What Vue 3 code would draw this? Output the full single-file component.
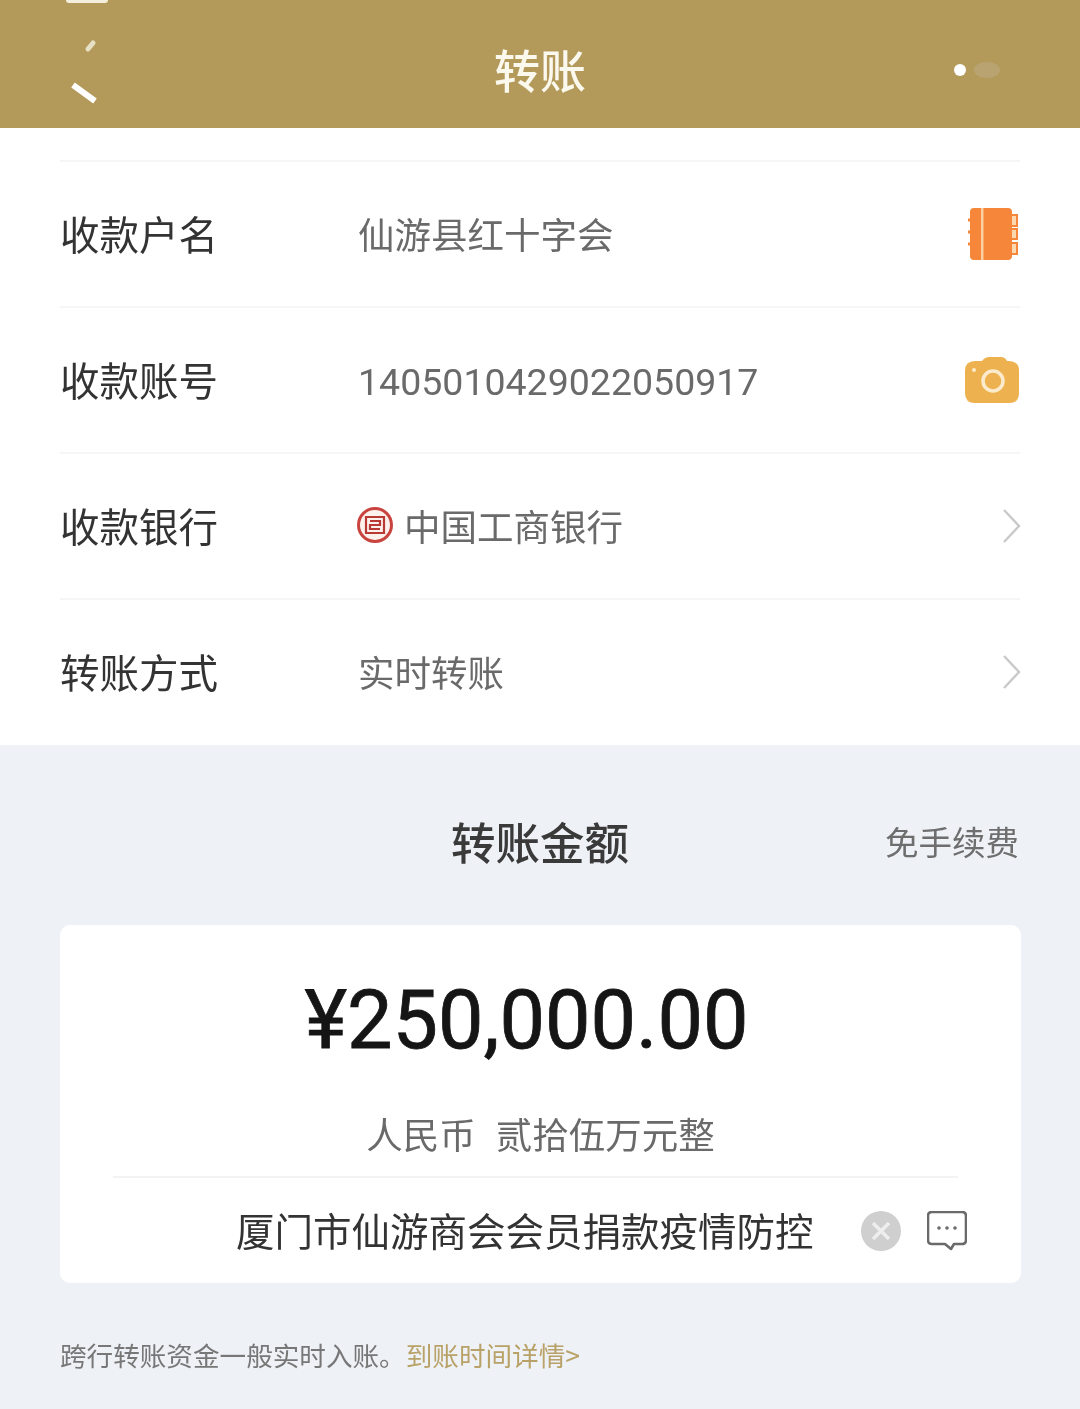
<script setup>
const rows = [
  { label: '收款户名', value: '仙游县红十字会', icon: 'book' },
  { label: '收款账号', value: '14050104290 22050917'.replace(' ', ''), icon: 'camera', num: true },
  { label: '收款银行', value: '中国工商银行', icon: 'chevron', bank: true },
  { label: '转账方式', value: '实时转账', icon: 'chevron' },
]
</script>

<template>
  <div class="page">
    <header class="topbar">
      <span class="status-scrap"></span>
      <svg class="back" width="60" height="80" viewBox="0 0 60 80">
        <path d="M33 4 L28 10" stroke="#e6e0c4" stroke-width="5" stroke-linecap="round" fill="none" />
        <path d="M13 46 L35 62" stroke="#fff" stroke-width="6" fill="none" />
      </svg>
      <h1 class="title">转账</h1>
      <div class="more">
        <i class="dot"></i>
        <i class="dot-faint"></i>
      </div>
    </header>

    <section class="form">
      <div v-for="row in rows" :key="row.label" class="row">
        <span class="label">{{ row.label }}</span>
        <span class="value" :class="{ num: row.num }">
          <svg v-if="row.bank" class="icbc" width="38" height="38" viewBox="0 0 38 38">
            <circle cx="19" cy="19" r="16.5" fill="#fdf1ee" stroke="#c9433f" stroke-width="3" />
            <path d="M10 11 H28 V27 H10 Z M14 15 H24 V19 H14 V23 H24" fill="none" stroke="#b93a35" stroke-width="2.2" />
          </svg>
          {{ row.value }}
        </span>
        <svg v-if="row.icon === 'book'" class="icon" width="52" height="56" viewBox="0 0 52 56">
          <rect x="3" y="2" width="42" height="52" rx="4" fill="#f5863a" />
          <rect x="14" y="2" width="2.5" height="52" fill="#fbcf9f" />
          <path d="M45 9 H50 V20 H45 M45 23 H50 V33 H45 M45 37 H50 V48 H45" fill="#fbd9b0" stroke="#f5863a" stroke-width="2" />
          <path d="M1 14 H5 M1 26 H5 M1 38 H5" stroke="#f5863a" stroke-width="3" />
        </svg>
        <svg v-else-if="row.icon === 'camera'" class="icon" width="54" height="48" viewBox="0 0 54 48">
          <path d="M10 5 H17 Q20 1 24 1 H36 Q40 1 42 5 H44 Q54 5 54 15 V37 Q54 47 44 47 H10 Q0 47 0 37 V15 Q0 5 10 5 Z" fill="#edb24f" />
          <circle cx="28" cy="25" r="10" fill="none" stroke="#fbeacb" stroke-width="3.5" />
          <circle cx="9" cy="14" r="2" fill="#fbeacb" />
        </svg>
        <svg v-else class="icon chevron" width="20" height="36" viewBox="0 0 20 36">
          <path d="M2 2 L17 18 L2 34" fill="none" stroke="#c9c9c9" stroke-width="2.4" />
        </svg>
      </div>
    </section>

    <section class="amount-area">
      <div class="amount-head">
        <h2 class="amount-title">转账金额</h2>
        <span class="fee">免手续费</span>
      </div>

      <div class="card">
        <div class="amount">¥250,000.00</div>
        <div class="cn-amount"><span>人民币</span><span>贰拾伍万元整</span></div>
        <div class="note-row">
          <span class="note">厦门市仙游商会会员捐款疫情防控</span>
          <svg class="clear" width="40" height="40" viewBox="0 0 40 40">
            <circle cx="20" cy="20" r="20" fill="#cfcfcf" />
            <path d="M12 12 L28 28 M28 12 L12 28" stroke="#eee" stroke-width="3.5" />
          </svg>
          <svg class="msg" width="40" height="40" viewBox="0 0 40 40">
            <path d="M5 1 H35 Q39 1 39 5 V29 Q39 33 35 33 H27 L24 38 L18 33 H5 Q1 33 1 29 V5 Q1 1 5 1 Z" fill="none" stroke="#6a6a6a" stroke-width="2.6" stroke-linejoin="round" />
            <circle cx="12" cy="17" r="1.8" fill="#6a6a6a" />
            <circle cx="20" cy="17" r="1.8" fill="#6a6a6a" />
            <circle cx="28" cy="17" r="1.8" fill="#6a6a6a" />
          </svg>
        </div>
      </div>

      <p class="tip">跨行转账资金一般实时入账。<a class="tip-link">到账时间详情&gt;</a></p>
    </section>
  </div>
</template>

<style>
html, body {
  margin: 0;
  background: #eef1f6;
}
</style>

<style scoped>
.page {
  width: 1080px;
  height: 1409px;
  overflow: hidden;
  font-family: "Noto Sans CJK SC", "Noto Sans", sans-serif;
  background: #eef1f6;
  filter: blur(0.6px);
}

.topbar {
  position: relative;
  display: grid;
  grid-template-columns: 1fr auto 1fr;
  align-items: center;
  height: 128px;
  padding: 0 60px;
  box-sizing: border-box;
  background: #b39a5b;
}

.status-scrap {
  position: absolute;
  left: 66px;
  top: 0;
  width: 42px;
  height: 3px;
  background: #f4efdc;
  border-radius: 0 0 3px 3px;
}

.back {
  margin-top: 30px;
}

.title {
  margin: 0;
  font-size: 46px;
  font-weight: 500;
  color: #fbf8ee;
  line-height: 1;
  padding-top: 8px;
}

.more {
  display: flex;
  justify-content: flex-end;
  align-items: center;
  gap: 8px;
  padding-right: 20px;
  padding-top: 12px;
}

.dot {
  width: 12px;
  height: 12px;
  border-radius: 50%;
  background: #fff;
}

.dot-faint {
  width: 26px;
  height: 16px;
  border-radius: 50%;
  background: #b9a371;
}

.form {
  padding: 32px 60px 1px;
  background: #fff;
}

.row {
  display: flex;
  align-items: center;
  height: 146px;
  box-sizing: border-box;
  border-top: 2px solid #f6f6f6;
}

.label {
  width: 298px;
  box-sizing: border-box;
  font-size: 39.5px;
  color: #333;
  line-height: 1;
  padding-bottom: 2px;
}

.value {
  flex: 1;
  display: flex;
  align-items: center;
  gap: 10px;
  font-size: 36.5px;
  color: #6a6a6a;
  line-height: 1;
}

.value.num {
  font-family: Roboto, sans-serif;
  font-size: 37.5px;
  padding-top: 6px;
}

.icbc {
  margin-left: -2px;
  margin-top: -2px;
}

.icon {
  flex: none;
  margin-right: 1px;
}

.chevron {
  margin-right: -2px;
}

.amount-area {
  padding: 0 60px;
}

.amount-head {
  position: relative;
  display: flex;
  justify-content: center;
  align-items: center;
  height: 180px;
  padding-top: 12px;
  box-sizing: border-box;
}

.amount-title {
  margin: 0;
  font-size: 44.5px;
  font-weight: 500;
  color: #3a3a3a;
  line-height: 1;
}

.fee {
  position: absolute;
  right: 1px;
  top: 79px;
  font-size: 33.5px;
  color: #6e6e6e;
  line-height: 1;
}

.card {
  height: 358px;
  width: 961px;
  background: #fff;
  border-radius: 10px;
  display: flex;
  flex-direction: column;
  align-items: center;
}

.amount {
  margin-top: 49px;
  padding-right: 28px;
  font-family: Roboto, sans-serif;
  font-size: 81px;
  font-weight: 400;
  -webkit-text-stroke: 0.8px #151515;
  color: #151515;
  line-height: 94px;
}

.cn-amount {
  display: flex;
  gap: 20px;
  margin-top: 44px;
  font-size: 36.5px;
  color: #6a6a6a;
  line-height: 44px;
  width: 845px;
  align-self: flex-start;
  margin-left: 53px;
  padding-left: 10px;
  box-sizing: border-box;
  justify-content: center;
  padding-bottom: 20px;
  border-bottom: 2px solid #f3f3f3;
}

.note-row {
  flex: 1;
  width: 100%;
  display: flex;
  align-items: center;
  box-sizing: border-box;
  padding-left: 176px;
}

.note {
  font-size: 38.5px;
  color: #333;
  line-height: 1;
  white-space: nowrap;
  margin-bottom: 2px;
}

.clear {
  margin-left: 47px;
}

.msg {
  margin-left: 26px;
}

.tip {
  margin: 56px 0 0;
  font-size: 26.6px;
  color: #777;
  line-height: 1.2;
}

.tip-link {
  color: #b9a268;
}
</style>
